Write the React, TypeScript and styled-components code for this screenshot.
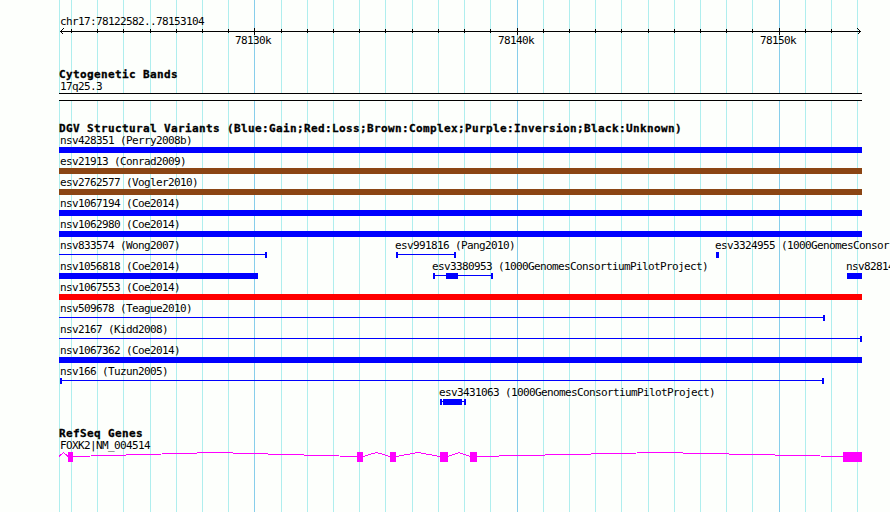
import styled, { createGlobalStyle } from "styled-components"

const LEFT = 59
const RIGHT = 862
const WIDTH = RIGHT - LEFT

const MINOR = [
    59, 71, 97, 123, 150, 176, 202, 228, 281, 307, 333, 359, 385, 412, 438, 464, 490,
    543, 569, 595, 621, 648, 674, 700, 726, 752, 805, 831, 857,
]

const MAJOR = [
    { x: 254, label: "78130k", labelX: 235 },
    { x: 517, label: "78140k", labelX: 498 },
    { x: 779, label: "78150k", labelX: 760 },
]

const BLUE = "#0000ff"
const BROWN = "#8b4513"
const RED = "#ff0000"
const MAGENTA = "#ff00ff"

type Feature = {
    name: string
    labelX?: number
    color?: string
    line?: [number, number]
    boxes?: [number, number][]
}

const full: [number, number][] = [[LEFT, RIGHT]]

const LANES: Feature[][] = [
    [{ name: "nsv428351 (Perry2008b)", boxes: full }],
    [{ name: "esv21913 (Conrad2009)", color: BROWN, boxes: full }],
    [{ name: "esv2762577 (Vogler2010)", color: BROWN, boxes: full }],
    [{ name: "nsv1067194 (Coe2014)", boxes: full }],
    [{ name: "nsv1062980 (Coe2014)", boxes: full }],
    [
        { name: "nsv833574 (Wong2007)", line: [59, 267], boxes: [[265, 267]] },
        { name: "esv991816 (Pang2010)", labelX: 395, line: [396, 456], boxes: [[396, 398], [454, 456]] },
        { name: "esv3324955 (1000GenomesConsor", labelX: 715, boxes: [[716, 719]] },
    ],
    [
        { name: "nsv1056818 (Coe2014)", boxes: [[59, 258]] },
        {
            name: "esv3380953 (1000GenomesConsortiumPilotProject)",
            labelX: 432,
            line: [433, 493],
            boxes: [[433, 435], [446, 458], [491, 493]],
        },
        { name: "nsv82814", labelX: 846, boxes: [[847, 862]] },
    ],
    [{ name: "nsv1067553 (Coe2014)", color: RED, boxes: full }],
    [{ name: "nsv509678 (Teague2010)", line: [59, 825], boxes: [[823, 825]] }],
    [{ name: "nsv2167 (Kidd2008)", line: [59, 862], boxes: [[860, 862]] }],
    [{ name: "nsv1067362 (Coe2014)", boxes: full }],
    [{ name: "nsv166 (Tuzun2005)", line: [60, 824], boxes: [[60, 62], [822, 824]] }],
    [
        {
            name: "esv3431063 (1000GenomesConsortiumPilotProject)",
            labelX: 439,
            line: [440, 466],
            boxes: [[440, 442], [443, 462], [464, 466]],
        },
    ],
]

const EXONS = [[68, 73], [357, 363], [390, 396], [440, 448], [470, 477], [843, 862]]

const GlobalStyle = createGlobalStyle`
    body {
        margin: 0;
        background-color: #fdfffc;
    }
`

const Page = styled.main`
    position: relative;
    width: 890px;
    height: 512px;
    overflow: hidden;
    background-color: #fdfffc;
    color: #000000;
    font-family: "DejaVu Sans Mono", monospace;
`

const GridLines = styled.svg`
    position: absolute;
    top: 0;
    left: 0;
`

const Tracks = styled.div`
    position: relative;
    display: flex;
    flex-direction: column;
    padding: 16px 0 0 ${LEFT}px;
`

const Track = styled.section<{ $gap: number }>`
    display: flex;
    flex-direction: column;
    margin-top: ${({ $gap }) => $gap}px;
`

const Title = styled.h2`
    height: 13px;
    margin: 0;
    font-size: 11px;
    font-weight: 700;
    line-height: 14px;
    letter-spacing: 0.378px;
    -webkit-text-stroke: 0.3px #000000;
    white-space: pre;
`

const Labels = styled.div`
    display: grid;
    height: 12px;
`

const Label = styled.span<{ $x?: number }>`
    grid-area: 1 / 1;
    margin-left: ${({ $x = 60 }) => $x - LEFT}px;
    font-size: 11px;
    line-height: 12px;
    letter-spacing: -0.622px;
    white-space: pre;
`

const Drawing = styled.svg`
    display: block;
    shape-rendering: crispEdges;
`

const Band = styled.div`
    width: ${WIDTH}px;
    height: 6px;
    background-color: #fdfffc;
    border-top: 1px solid #000000;
    border-bottom: 1px solid #000000;
`

function Ruler() {
    return (
        <Drawing width={WIDTH} height={7} viewBox={`${LEFT} 28 ${WIDTH} 7`}>
            <rect x={60} y={31} width={801} height={1} />
            {MINOR.filter((x) => x > 60 && x < 857).map((x) => (
                <rect key={x} x={x} y={29} width={1} height={4} />
            ))}
            {MAJOR.map(({ x }) => (
                <rect key={x} x={x} y={28} width={1} height={7} />
            ))}
            <path d="M63.5 28.5L60.5 31.5L63.5 34.5M857.5 28.5L860.5 31.5L857.5 34.5" fill="none" stroke="#000000" />
        </Drawing>
    )
}

function Lane({ features }: { features: Feature[] }) {
    return (
        <>
            <Labels>
                {features.map(({ name, labelX }) => (
                    <Label key={name} $x={labelX}>{name}</Label>
                ))}
            </Labels>
            <Drawing width={WIDTH} height={9} viewBox={`${LEFT} 0 ${WIDTH} 9`}>
                {features.map(({ name, color = BLUE, line, boxes = [] }) => (
                    <g key={name} fill={color}>
                        {line && <rect x={line[0]} y={2} width={line[1] - line[0]} height={1} />}
                        {boxes.map(([start, end]) => (
                            <rect key={start} x={start} y={0} width={end - start} height={6} />
                        ))}
                    </g>
                ))}
            </Drawing>
        </>
    )
}

function Gene() {
    // each intron rises to its middle and falls back to the next exon
    const introns = EXONS.slice(1).map(([start], i) => {
        const from = EXONS[i][1]
        return `M${from} 4.5L${(from + start) / 2} 0.5L${start} 4.5`
    })

    return (
        <Drawing width={WIDTH} height={10} viewBox={`${LEFT} 0 ${WIDTH} 10`}>
            <path d={`M59 4.5L63.5 0.5L68 4.5${introns.join("")}`} fill="none" stroke={MAGENTA} />
            {EXONS.map(([start, end]) => (
                <rect key={start} x={start} y={0} width={end - start} height={10} fill={MAGENTA} />
            ))}
        </Drawing>
    )
}

export default function App() {
    return (
        <>
            <GlobalStyle />
            <Page>
                <GridLines width={890} height={512} shapeRendering="crispEdges">
                    {MINOR.map((x) => (
                        <rect key={x} x={x} y={0} width={1} height={512} fill="#afeeee" />
                    ))}
                    {MAJOR.map(({ x }) => (
                        <rect key={x} x={x} y={0} width={1} height={512} fill="#87ceeb" />
                    ))}
                </GridLines>

                <Tracks>
                    {/* Scale */}
                    <Track $gap={0}>
                        <Labels>
                            <Label>chr17:78122582..78153104</Label>
                        </Labels>
                        <Ruler />
                        <Labels>
                            {MAJOR.map(({ label, labelX }) => (
                                <Label key={label} $x={labelX}>{label}</Label>
                            ))}
                        </Labels>
                    </Track>

                    <Track $gap={21}>
                        <Title>Cytogenetic Bands</Title>
                        <Labels>
                            <Label>17q25.3</Label>
                        </Labels>
                        <Band />
                    </Track>

                    <Track $gap={21}>
                        <Title>DGV Structural Variants (Blue:Gain;Red:Loss;Brown:Complex;Purple:Inversion;Black:Unknown)</Title>
                        {LANES.map((features) => (
                            <Lane key={features[0].name} features={features} />
                        ))}
                    </Track>

                    <Track $gap={19}>
                        <Title>RefSeq Genes</Title>
                        <Labels>
                            <Label>FOXK2|NM_004514</Label>
                        </Labels>
                        <Gene />
                    </Track>
                </Tracks>
            </Page>
        </>
    )
}
